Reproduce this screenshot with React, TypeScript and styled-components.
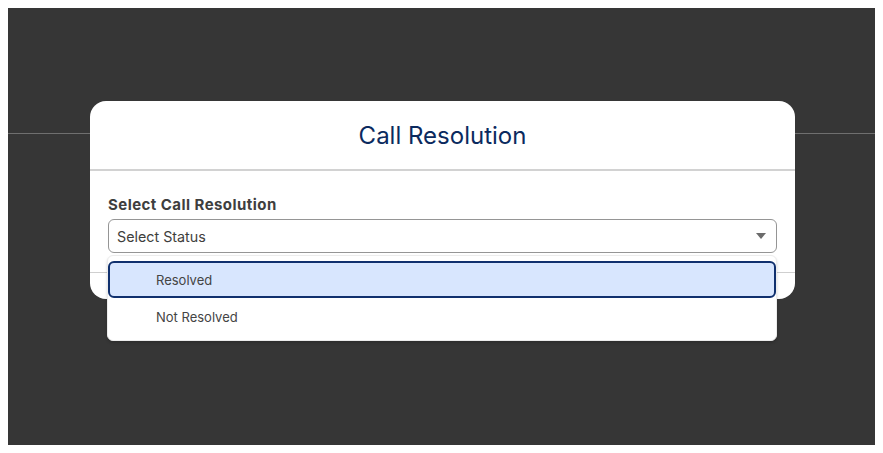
import React, { useState } from 'react';
import styled, { createGlobalStyle } from 'styled-components';

const GlobalStyle = createGlobalStyle`
  body {
    margin: 8px;
    background: #ffffff;
    font-family: Inter, "Liberation Sans", Arial, sans-serif;
  }
`;

const Backdrop = styled.div`
  display: grid;
  height: 437px;
  margin-right: -2px;
  background-color: #363636;
  overflow: hidden;
`;

const PageHeader = styled.div`
  grid-area: 1 / 1;
  height: 125px;
  border-bottom: 1px solid #6f6f6f;
`;

const Modal = styled.div`
  grid-area: 1 / 1;
  justify-self: center;
  align-self: start;
  margin-top: 93px;
  width: 705px;
  background-color: #ffffff;
  border-radius: 16px;
  display: flex;
  flex-direction: column;
`;

const Header = styled.div`
  height: 68px;
  display: flex;
  align-items: center;
  justify-content: center;
  border-bottom: 2px solid #d2d2d2;
`;

const Title = styled.h2`
  margin: 0;
  font-size: 24px;
  font-weight: 400;
  color: #0b2a5e;
`;

const Body = styled.div`
  padding: 25px 18px 19px;
  display: flex;
  flex-direction: column;
  gap: 5px;
`;

const Label = styled.div`
  font-size: 15px;
  line-height: 18px;
  font-weight: 700;
  letter-spacing: 0.45px;
  color: #3e3e3e;
`;

const Field = styled.div`
  position: relative;
`;

const SelectBox = styled.div`
  height: 34px;
  box-sizing: border-box;
  border: 1px solid #959595;
  border-radius: 6px;
  display: flex;
  align-items: center;
  justify-content: space-between;
  padding: 0 10px 0 8px;
  font-size: 14.3px;
  color: #3e3e3c;
`;

const Arrow = styled.span`
  width: 0;
  height: 0;
  border-left: 5px solid transparent;
  border-right: 5px solid transparent;
  border-top: 6px solid #6b6b6b;
`;

const Listbox = styled.ul`
  position: absolute;
  top: 36px;
  left: -1px;
  right: 0;
  margin: 0;
  padding: 5px 0 5px;
  list-style: none;
  background-color: #ffffff;
  border: 1px solid #ececec;
  border-radius: 6px;
  box-shadow: 0 2px 3px rgba(0, 0, 0, 0.16);
  z-index: 2;
`;

const Option = styled.li<{ $active?: boolean }>`
  height: 37px;
  box-sizing: border-box;
  display: flex;
  align-items: center;
  padding-left: 46px;
  font-size: 13px;
  color: #444444;
  border: 2px solid ${(p) => (p.$active ? '#10306e' : 'transparent')};
  border-radius: 6px;
  background-color: ${(p) => (p.$active ? '#d8e6fe' : 'transparent')};
  cursor: pointer;
`;

const Footer = styled.div`
  height: 26px;
  border-top: 1px solid #cfcfcf;
`;

const options = ['Resolved', 'Not Resolved'];

const App = () => {
  const [active, setActive] = useState('Resolved');

  return (
    <>
      <GlobalStyle />
      <Backdrop>
        <PageHeader />
        <Modal>
          <Header>
            <Title>Call Resolution</Title>
          </Header>
          <Body>
            <Label>Select Call Resolution</Label>
            <Field>
              <SelectBox>
                <span>Select Status</span>
                <Arrow />
              </SelectBox>
              <Listbox>
                {options.map((o) => (
                  <Option key={o} $active={o === active} onMouseEnter={() => setActive(o)}>
                    {o}
                  </Option>
                ))}
              </Listbox>
            </Field>
          </Body>
          <Footer />
        </Modal>
      </Backdrop>
    </>
  );
};

export default App;
